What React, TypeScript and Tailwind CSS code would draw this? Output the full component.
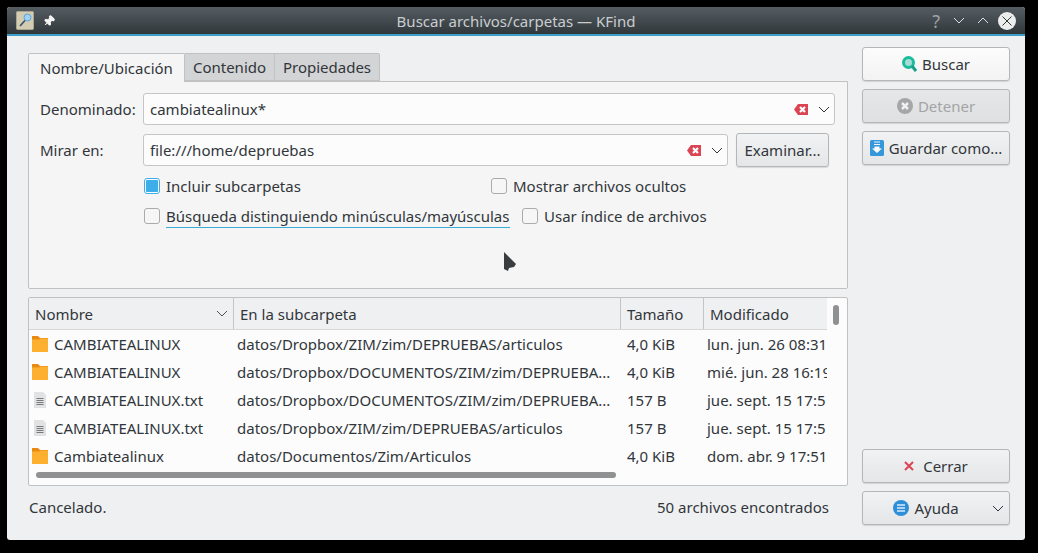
import type { ReactNode } from 'react';
import { Pin } from 'lucide-react';

const rows = [
  { icon: 'folder', name: 'CAMBIATEALINUX', path: 'datos/Dropbox/ZIM/zim/DEPRUEBAS/articulos', size: '4,0 KiB', date: 'lun. jun. 26 08:31' },
  { icon: 'folder', name: 'CAMBIATEALINUX', path: 'datos/Dropbox/DOCUMENTOS/ZIM/zim/DEPRUEBA...', size: '4,0 KiB', date: 'mié. jun. 28 16:19' },
  { icon: 'file', name: 'CAMBIATEALINUX.txt', path: 'datos/Dropbox/DOCUMENTOS/ZIM/zim/DEPRUEBA...', size: '157 B', date: 'jue. sept. 15 17:5' },
  { icon: 'file', name: 'CAMBIATEALINUX.txt', path: 'datos/Dropbox/ZIM/zim/DEPRUEBAS/articulos', size: '157 B', date: 'jue. sept. 15 17:5' },
  { icon: 'folder', name: 'Cambiatealinux', path: 'datos/Documentos/Zim/Articulos', size: '4,0 KiB', date: 'dom. abr. 9 17:51' },
];

function FolderIcon() {
  return (
    <svg width="16" height="16" viewBox="0 0 16 16" className="shrink-0">
      <path d="M0 0h6l2 2h8v14H0z" fill="#e98a15" />
      <path d="M0 3.5L7 3.5L8.5 2.5H16V16H0z" fill="#fdb02f" />
    </svg>
  );
}

function FileIcon() {
  return (
    <svg width="16" height="16" viewBox="0 0 16 16" className="shrink-0">
      <path d="M2 0h9l3 3v13H2z" fill="#e1e2e3" />
      <path d="M4.5 6.5h7M4.5 8.5h7M4.5 10.5h7M4.5 12.5h7" stroke="#77797b" strokeWidth="1" />
    </svg>
  );
}

function ClearIcon() {
  return (
    <svg width="14" height="11" viewBox="0 0 14 11" className="shrink-0">
      <path d="M0 5.5L4 0h10v11H4z" fill="#da4453" />
      <path d="M6 3l5 5M11 3l-5 5" stroke="#fff" strokeWidth="2.2" />
    </svg>
  );
}

function Caret({ className = '' }: { className?: string }) {
  return (
    <svg width="12" height="7" viewBox="0 0 12 7" className={`shrink-0 ${className}`}>
      <path d="M1 1l5 5 5-5" fill="none" stroke="currentColor" strokeWidth="1" />
    </svg>
  );
}

function Check({ checked }: { checked?: boolean }) {
  return (
    <span className={`flex h-4 w-4 shrink-0 items-center justify-center rounded-[3px] border ${checked ? 'border-[#3daee9] bg-[#fcfcfc]' : 'border-[#a9abad] bg-[#f6f6f6]'}`}>
      {checked && <span className="h-3 w-3 rounded-[1px] bg-[#3daee9]" />}
    </span>
  );
}

function Button({ children, w = 'w-full', tone = 'normal' }: { children: ReactNode; w?: string; tone?: 'normal' | 'focus' | 'off' }) {
  const look =
    tone === 'focus'
      ? 'from-[#fcfcfc] to-[#f3f3f4] text-[#31363b]'
      : tone === 'off'
        ? 'from-[#e6e7e8] to-[#dfe0e1] text-[#a2a4a6]'
        : 'from-[#f1f2f3] to-[#e5e6e7] text-[#31363b]';
  return (
    <div className={`relative flex h-[34px] items-center justify-center gap-[5px] rounded-[3px] border border-[#b4b6b8] bg-gradient-to-b shadow-[0_1px_1px_rgba(0,0,0,0.12)] ${look} ${w}`}>
      {children}
    </div>
  );
}

function Combo({ text, w }: { text: string; w: string }) {
  return (
    <div className={`flex h-[32px] items-center rounded-[3px] border border-[#c4c5c7] bg-[#fcfcfc] pl-[6px] pr-[4px] ${w}`}>
      <span className="flex-1">{text}</span>
      <ClearIcon />
      <Caret className="ml-[10px]" />
    </div>
  );
}

export default function App() {
  return (
    <div className="h-[553px] w-[1038px] overflow-hidden bg-black pl-[7px] pt-[7px] font-['Noto_Sans',sans-serif] text-[15px] leading-5 text-[#31363b]">
      <div className="relative flex h-[533px] w-[1018px] flex-col rounded-[3px] bg-[#eff0f1]">
        {/* Title bar */}
        <div className="relative flex h-[29px] shrink-0 items-center rounded-t-[3px] border-b-[2px] border-[#3a9ec9] bg-gradient-to-b from-[#565d62] to-[#31383c] pl-[9px] pr-[9px] text-[#d5d8da]">
          <svg width="18" height="19" viewBox="0 0 18 19" className="shrink-0">
            <rect x="0.5" y="0.5" width="17" height="18" rx="1" fill="#d3ccb2" stroke="#a9a58f" />
            <circle cx="11.5" cy="6.5" r="3.5" fill="#9fd2f4" stroke="#5aa3d6" />
            <path d="M9 9.5L4 15" stroke="#34506b" strokeWidth="1.6" />
          </svg>
          <Pin size={12} strokeWidth={2} fill="#f5f5f5" className="ml-[9px] rotate-45 text-[#f5f5f5]" />
          <span className="absolute inset-x-0 text-center text-[#c9cdd0]">Buscar archivos/carpetas — KFind</span>
          <div className="ml-auto flex items-center">
            <span className="mr-[13px] text-[18px] text-[#9ca1a5]">?</span>
            <Caret className="mr-[12px] text-[#dfe2e4]" />
            <Caret className="mr-[9px] rotate-180 text-[#dfe2e4]" />
            <span className="flex h-[18px] w-[18px] items-center justify-center rounded-full bg-[#eceded]">
              <svg width="10" height="10" viewBox="0 0 10 10">
                <path d="M0.5 0.5l9 9M9.5 0.5l-9 9" stroke="#31363b" strokeWidth="1" />
              </svg>
            </span>
          </div>
        </div>

        <div className="flex min-h-0 flex-1 pl-[21px]">
          {/* Left column */}
          <div className="flex w-[820px] shrink-0 flex-col pt-[17px]">
            <div className="flex h-[28px] items-stretch">
              <div className="z-10 flex h-[29px] w-[157px] items-center justify-center rounded-t-[2px] border border-b-0 border-[#bfc1c3] bg-[#f5f5f5]">Nombre/Ubicación</div>
              <div className="flex w-[90px] items-center justify-center border-y border-r border-[#bfc1c3] bg-[#d3d4d5]">Contenido</div>
              <div className="flex w-[105px] items-center justify-center rounded-tr-[2px] border-y border-r border-[#bfc1c3] bg-[#d3d4d5]">Propiedades</div>
            </div>

            <div className="flex h-[208px] flex-col rounded-b-[2px] border border-[#bfc1c3] bg-[#f5f5f5] pl-[11px] pt-[11px]">
              <div className="flex items-center">
                <span className="w-[103px]">Denominado:</span>
                <Combo text="cambiatealinux*" w="w-[692px]" />
              </div>
              <div className="mt-[8px] flex items-center">
                <span className="w-[103px]">Mirar en:</span>
                <Combo text="file:///home/depruebas" w="w-[585px]" />
                <Button w="ml-[8px] w-[93px]">Examinar...</Button>
              </div>
              <div className="ml-[104px] mt-[11px] flex h-4 items-center">
                <Check checked />
                <span className="ml-[6px] w-[325px]">Incluir subcarpetas</span>
                <Check />
                <span className="ml-[6px]">Mostrar archivos ocultos</span>
              </div>
              <div className="ml-[104px] mt-[14px] flex h-4 items-center">
                <Check />
                <span className="ml-[6px] w-[344px] whitespace-nowrap border-b border-[#38acd4] pb-[1px] pt-[2px]">Búsqueda distinguiendo minúsculas/mayúsculas</span>
                <span className="ml-[12px]"><Check /></span>
                <span className="ml-[6px]">Usar índice de archivos</span>
              </div>
            </div>

            {/* Results */}
            <div className="relative mt-2 h-[189px] rounded-[2px] border border-[#bfc1c3] bg-[#fcfcfc]">
              <div className="flex h-[32px] w-[798px] border-b border-[#d5d6d7] bg-[#eff0f1]">
                <div className="flex w-[205px] items-center border-r border-[#c4c5c7] pl-[6px] pr-[5px]">
                  <span className="flex-1">Nombre</span>
                  <Caret className="text-[#4d5257]" />
                </div>
                <div className="flex w-[387px] items-center border-r border-[#c4c5c7] pl-[6px]">En la subcarpeta</div>
                <div className="flex w-[83px] items-center border-r border-[#c4c5c7] pl-[6px]">Tamaño</div>
                <div className="flex flex-1 items-center pl-[6px]">Modificado</div>
              </div>
              {rows.map((r, i) => (
                <div key={i} className="flex h-[28px] w-[798px] items-center overflow-hidden whitespace-nowrap">
                  <div className="flex w-[205px] items-center gap-[6px] pl-[3px]">
                    {r.icon === 'folder' ? <FolderIcon /> : <FileIcon />}
                    <span>{r.name}</span>
                  </div>
                  <div className="w-[390px] pl-[3px]">{r.path}</div>
                  <div className="w-[80px] pl-[3px]">{r.size}</div>
                  <div className="w-[123px] pl-[3px]">{r.date}</div>
                </div>
              ))}
              {/* scrollbars lie over the list */}
              <div className="absolute left-[804px] top-[7px] h-[20px] w-[6px] rounded-full bg-[#8f9192]" />
              <div className="absolute left-[7px] top-[174px] h-[6px] w-[580px] rounded-full bg-[#8f9192]" />
            </div>

            <div className="mt-[11px] flex items-center justify-between pl-px pr-[19px]">
              <span>Cancelado.</span>
              <span>50 archivos encontrados</span>
            </div>
          </div>

          {/* Right column */}
          <div className="ml-[14px] flex w-[148px] flex-col pb-[15px] pt-[11px]">
            <Button tone="focus">
              <svg width="15" height="16" viewBox="0 0 15 16">
                <circle cx="6.5" cy="6.5" r="5" fill="#a5dcd6" stroke="#1abc9c" strokeWidth="3" />
                <path d="M10 10l4 5" stroke="#16a085" strokeWidth="3" />
              </svg>
              Buscar
            </Button>
            <div className="mt-2">
              <Button tone="off">
                <svg width="16" height="16" viewBox="0 0 16 16">
                  <circle cx="8" cy="8" r="8" fill="#a4a6a8" />
                  <path d="M5 5l6 6M11 5l-6 6" stroke="#eff0f1" strokeWidth="2.5" />
                </svg>
                Detener
              </Button>
            </div>
            <div className="mt-2">
              <Button>
                <svg width="14" height="16" viewBox="0 0 14 16">
                  <rect width="14" height="16" rx="1.5" fill="#3498db" />
                  <path d="M4 2h6M4 4.5h6" stroke="#eaf4fb" strokeWidth="1.2" />
                  <path d="M4.5 6.5h5v2H12L7 13 2 8.5h2.5z" fill="#fcfcfc" />
                </svg>
                Guardar como...
              </Button>
            </div>
            <div className="mt-auto">
              <Button>
                <svg width="10" height="10" viewBox="0 0 10 10" className="mr-[4px]">
                  <path d="M1 1l8 8M9 1l-8 8" stroke="#da4453" strokeWidth="2" />
                </svg>
                Cerrar
              </Button>
            </div>
            <div className="mt-2">
              <Button>
                <div className="flex items-center gap-[5px] pr-[20px]">
                  <svg width="16" height="16" viewBox="0 0 16 16">
                    <circle cx="8" cy="8" r="8" fill="#2e8fd8" />
                    <path d="M4 5h8M4 8h8M4 11h8" stroke="#dcecf8" strokeWidth="1.4" />
                  </svg>
                  Ayuda
                </div>
                <Caret className="absolute right-[5px] top-[13px]" />
              </Button>
            </div>
          </div>
        </div>

        {/* mouse pointer lying over the pane */}
        <svg width="13" height="21" viewBox="0 0 13 21" className="absolute left-[497px] top-[245px]">
          <path d="M0 0l12 12-2 3-5 1-1 3-4-2z" fill="#3a3d40" />
        </svg>
      </div>
    </div>
  );
}
